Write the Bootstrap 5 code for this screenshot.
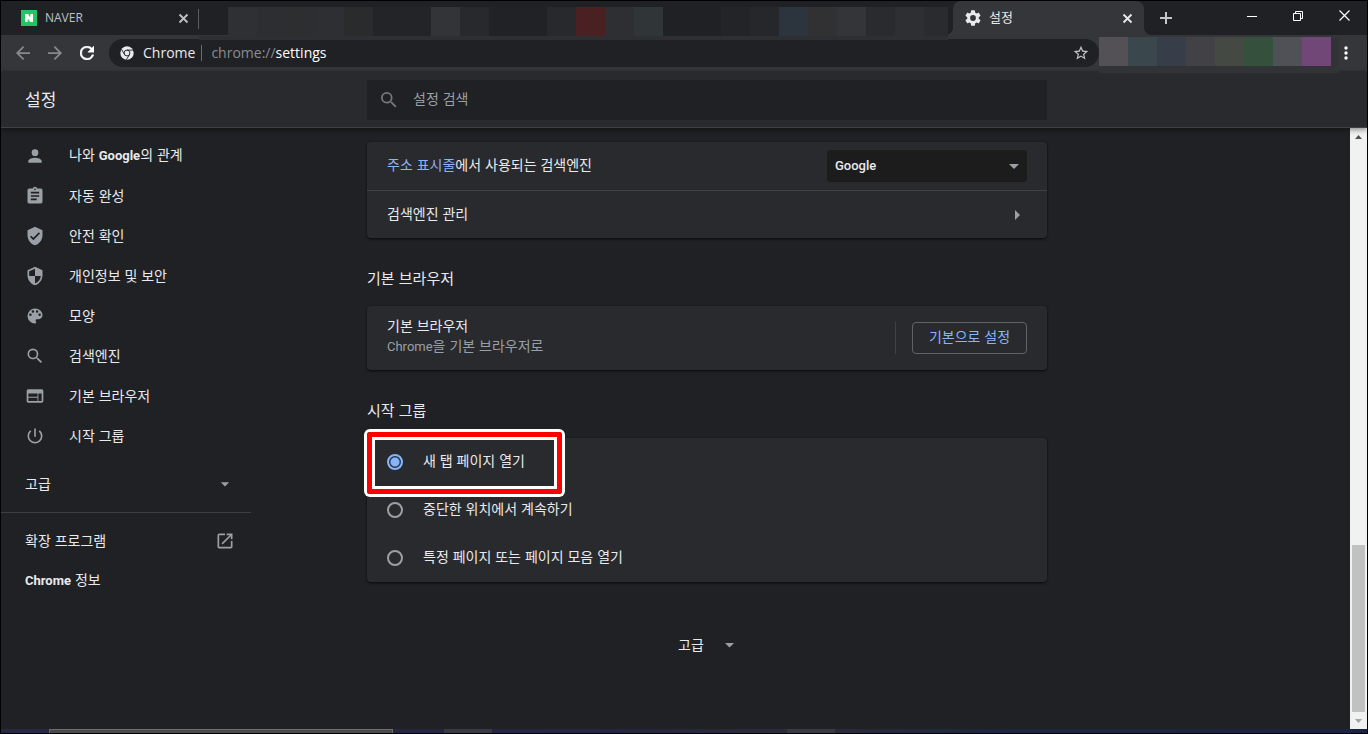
<!DOCTYPE html>
<html lang="ko">
<head>
<meta charset="utf-8">
<meta name="viewport" content="width=device-width, initial-scale=1">
<title>설정</title>
<link href="https://cdn.jsdelivr.net/npm/bootstrap@5.3.0/dist/css/bootstrap.min.css" rel="stylesheet">
<style>
  body { font: 14px/20px "Noto Sans CJK KR", sans-serif; color: #e8eaed; background: #202124; }
  a { color: inherit; text-decoration: none; }
  svg { display: block; fill: currentColor; flex: none; }
  .lat { font-family: Roboto, sans-serif; font-size: 13px; }
  .lat-strong { font-weight: 700; }
  .browser { min-height: 100vh; border: 1px solid #000; }
  .plain { background: none; border: 0; padding: 0; color: inherit; display: flex; align-items: center; justify-content: center; }

  /* tab strip */
  .tabs { height: 34px; }
  .tab-idle { width: 198px; flex: none; padding: 0 10px 0 20px; color: #bdc1c6; font-family: "Open Sans", sans-serif; font-size: 12px; position: relative; }
  .tab-idle::after { content: ""; position: absolute; right: 0; top: 8px; height: 20px; border-right: 1px solid #5a5c60; }
  .tab-live { width: 191px; flex: none; padding: 0 11px 0 12px; margin-left: 5px; background: #35363a; border-radius: 8px 8px 0 0; position: relative; font-size: 13px; }
  .tab-live .txt { padding-bottom: 2px; }
  .tab-live::before, .tab-live::after { content: ""; position: absolute; bottom: 0; width: 8px; height: 8px; }
  .tab-live::before { left: -8px; background: radial-gradient(circle at 0 0, transparent 8px, #35363a 8px); }
  .tab-live::after { right: -8px; background: radial-gradient(circle at 100% 0, transparent 8px, #35363a 8px); }
  .mosaic i { display: block; width: 29px; height: 29px; flex: none; }
  .mosaic-tabs { flex: 1 1 0; min-width: 0; height: 29px; margin-top: 6px; z-index: 1; box-shadow: 0 4px 0 #2e2f32; position: relative; }
  .mosaic-tabs i:last-child { flex: 1 1 0; }
  .win-btn { width: 46px; height: 29px; color: #fff; }

  /* toolbar */
  .toolbar { height: 36px; background: #35363a; padding-left: 6px; }
  .tool-btn { width: 32px; height: 32px; color: #87898d; }
  .omnibox { height: 28px; margin-left: 6px; padding: 0 10px 0 11px; border-radius: 14px; background: #202124; font: 14px/20px "Open Sans", sans-serif; gap: 9px; }
  .omni-sep { width: 1px; height: 16px; background: #6b6d71; margin-left: -3px; }
  .url { color: #8a8d91; }
  .mosaic-ext { box-shadow: 0 7px 0 #323337; position: relative; z-index: 1; margin-bottom: 3px; padding-right: 8px; background: #323337; }

  /* settings page */
  .cols { display: grid; grid-template-columns: minmax(266px, 366fr) minmax(0, 680px) minmax(16px, 303fr); }
  .page-head { background: #292a2d; border-bottom: 1px solid #3f4145; padding: 9px 17px 7px 0; box-shadow: 0 2px 5px #0006; position: relative; }
  .page-title { font-size: 17px; line-height: 24px; padding: 0 0 2px 24px; }
  .find { height: 40px; background: #202124; border-radius: 2px; padding: 0 14px; color: #75787c; }
  .find input { background: none; border: 0; outline: 0; color: #e8eaed; height: 36px; }
  .find input::placeholder { color: #9aa0a6; opacity: 1; }
  .side { width: 250px; padding-top: 8px; }
  .side a { height: 40px; padding-left: 24px; gap: 24px; }
  .side svg { color: #9aa0a6; }
  .side .txt { padding-bottom: 3px; }
  .side-more { width: 100%; height: 48px; padding: 0 16px 0 24px; margin-top: 4px; }
  .side-rule { border-top: 1px solid #3c4043; margin: 4px 0 8px; }
  .panel { background: #292a2d; border-radius: 4px; box-shadow: 0 1px 2px #0008, 0 1px 3px #0004; padding: 0 20px; position: relative; }
  .panel-row { height: 48px; }
  .panel-row .txt { padding-bottom: 4px; }
  .panel-line { border-top: 1px solid #3f4145; margin: 0 -20px; padding: 0 20px; }
  .sec-title { font-size: 15px; line-height: 24px; margin: 28px 0 16px; font-weight: 400; }
  .accent { color: #8ab4f8; }
  .soft { color: #9aa0a6; }
  .engine { width: 200px; height: 32px; padding: 0 32px 0 8px; font: 500 13px/32px Roboto, sans-serif; color: #e8eaed; border: 0; border-radius: 4px;
    background: #1c1c1d url("data:image/svg+xml,%3Csvg xmlns='http://www.w3.org/2000/svg' viewBox='0 0 10 5'%3E%3Cpath fill='%239aa0a6' d='M0 0h10L5 5z'/%3E%3C/svg%3E") no-repeat right 8px center / 10px 5px; }
  .default-btn { width: 115px; height: 32px; padding: 0 0 4px; border: 1px solid #5f6368; border-radius: 4px; color: #8ab4f8; font-size: 14px; line-height: 20px; }
  .btn-rule { height: 32px; border-left: 1px solid #3f4145; margin-right: 16px; }
  .pick { gap: 20px; }
  .pick .form-check-input { width: 16px; height: 16px; margin: 0; background: none; border: 2px solid #9aa0a6; box-shadow: none; }
  .pick .form-check-input:checked { border-color: #8ab4f8; background: radial-gradient(circle, #8ab4f8 4px, #24364f 5px); }
  .callout { position: absolute; left: 0; top: -6px; width: 195px; height: 62px; border: 5px solid #f00; border-radius: 3px; box-shadow: 0 0 0 3px #fff, inset 0 0 0 3px #fff; pointer-events: none; }
  .more { gap: 18px; margin: 50px auto 0; height: 24px; }

  .scroller { width: 17px; background: #f1f1f1; color: #505050; }
  .scroller .plain { height: 17px; }
  .scroll-gap { flex: 400 1 0; }
  .scroll-thumb { flex: 167 1 0; margin: 0 2px; background: #c1c1c1; }
  .taskbar { height: 4px; background: linear-gradient(90deg, #272844, #242540 45%, #2c2b3b 58%, #1b2640 75%, #1a2440); }
  .task-open { width: 344px; margin-left: 48px; background: #4b4a4b; border: 1px solid #6d6b6d; border-bottom: 0; }
  .task-idle { width: 48px; background: #3a3946; }
</style>
<script src="https://cdn.jsdelivr.net/npm/bootstrap@5.3.0/dist/js/bootstrap.bundle.min.js"></script>
</head>
<body>
<div class="browser d-flex flex-column">

  <div class="tabs d-flex">
    <div class="tab-idle d-flex align-items-center">
      <svg width="16" height="16" viewBox="0 0 16 16"><rect width="16" height="16" fill="#1fc663"/><path fill="#fff" d="M4 4h3l2.300 3.600V4H12v8H9.200L6.700 8.400V12H4z"/></svg>
      <span class="ms-2 flex-grow-1">NAVER</span>
      <button class="plain" aria-label="탭 닫기"><svg width="11" height="11" viewBox="0 0 11 11"><path d="M1.500 1.500l8 8m0-8l-8 8" stroke="currentColor" stroke-width="1.800"/></svg></button>
    </div>
    <div class="mosaic mosaic-tabs d-flex">
      <i></i><i style="background:#2f3033"></i><i style="background:#2d2e31"></i><i style="background:#2d2e30"></i><i style="background:#2e2f32"></i><i style="background:#2a2b2d"></i><i style="background:#232427"></i><i style="background:#232427"></i><i style="background:#333438"></i><i style="background:#28292c"></i><i style="background:#212225"></i><i style="background:#212225"></i><i style="background:#28292c"></i><i style="background:#4a2023"></i><i style="background:#2e2f33"></i><i style="background:#303537"></i><i style="background:#202124"></i><i style="background:#202124"></i><i style="background:#232427"></i><i style="background:#26272a"></i><i style="background:#2c353d"></i><i style="background:#313133"></i><i style="background:#343539"></i><i style="background:#2a2b2e"></i><i style="background:#2e2f33"></i><i style="background:#2a2b2e"></i>
    </div>
    <div class="tab-live d-flex align-items-center">
      <svg width="16" height="16" viewBox="2 2 20 20"><path d="M19.140 12.940c.04-.3.060-.61.060-.94s-.02-.64-.07-.94l2.030-1.580a.49.49 0 0 0 .12-.61l-1.920-3.320a.488.488 0 0 0-.59-.22l-2.390.96c-.5-.38-1.030-.7-1.620-.94L14.400 2.810a.484.484 0 0 0-.48-.41h-3.840c-.24 0-.43.17-.47.41L9.250 5.350c-.59.24-1.130.57-1.620.94l-2.390-.96c-.22-.08-.47 0-.59.22L2.740 8.870c-.12.21-.08.47.12.61l2.030 1.580c-.05.3-.09.63-.09.94s.02.64.07.94l-2.030 1.580a.49.49 0 0 0-.12.61l1.920 3.320c.12.22.37.29.59.22l2.390-.96c.5.38 1.030.7 1.620.94l.36 2.540c.05.24.24.41.48.41h3.840c.24 0 .44-.17.47-.41l.36-2.540c.59-.24 1.130-.56 1.620-.94l2.390.96c.22.08.47 0 .59-.22l1.920-3.320c.12-.22.07-.47-.12-.61zM12 15.600A3.600 3.600 0 1 1 12 8.400a3.600 3.600 0 0 1 0 7.200z"/></svg>
      <span class="txt ms-2 flex-grow-1">설정</span>
      <button class="plain" aria-label="탭 닫기"><svg width="11" height="11" viewBox="0 0 11 11"><path d="M1.500 1.500l8 8m0-8l-8 8" stroke="currentColor" stroke-width="1.800"/></svg></button>
    </div>
    <button class="plain ms-3" aria-label="새 탭"><svg width="12" height="12" viewBox="0 0 12 12"><path d="M5 0h2v5h5v2H7v5H5V7H0V5h5z" fill="#c4c7ca"/></svg></button>
    <div class="d-flex" style="margin-left:57px">
      <button class="plain win-btn" aria-label="최소화"><svg width="10" height="10" viewBox="0 0 10 10"><path d="M0 5h10v1H0z"/></svg></button>
      <button class="plain win-btn" aria-label="이전 크기로"><svg width="10" height="10" viewBox="0 0 10 10"><path d="M.5 2.500h7v7h-7zM2.500 2.500v-2h7v7h-2" fill="none" stroke="currentColor"/></svg></button>
      <button class="plain win-btn" aria-label="닫기"><svg width="11" height="11" viewBox="0 0 11 11"><path d="M.5.500l10 10m0-10l-10 10" stroke="currentColor" stroke-width="1.200"/></svg></button>
    </div>
  </div>

  <div class="toolbar d-flex align-items-center">
    <button class="plain tool-btn" aria-label="뒤로"><svg width="14" height="14" viewBox="4 4 16 16"><path d="M20 11H7.830l5.590-5.590L12 4l-8 8 8 8 1.410-1.410L7.830 13H20z"/></svg></button>
    <button class="plain tool-btn" aria-label="앞으로"><svg width="14" height="14" viewBox="4 4 16 16"><path d="M12 4l-1.410 1.410L16.170 11H4v2h12.170l-5.580 5.590L12 20l8-8z"/></svg></button>
    <button class="plain tool-btn text-white" aria-label="새로고침"><svg width="14" height="14" viewBox="4 4 16 16"><path stroke="currentColor" stroke-width=".6" d="M17.650 6.350A7.958 7.958 0 0 0 12 4a8 8 0 1 0 7.730 10h-2.080A6 6 0 1 1 12 6c1.660 0 3.140.69 4.220 1.780L13 11h7V4z"/></svg></button>
    <div class="omnibox d-flex align-items-center flex-grow-1">
      <svg width="14" height="14" viewBox="0 0 24 24"><circle cx="12" cy="12" r="11.500" fill="#e8eaed"/><g fill="none" stroke="#202124" stroke-width="1.600"><circle cx="12" cy="12" r="5"/><path d="M12 7h10.500M16.300 14.500L11 23.500M7.700 14.500L2.500 5.500"/></g></svg>
      <span>Chrome</span><span class="omni-sep"></span>
      <div class="url flex-grow-1 lh-sm" role="textbox" aria-label="주소" tabindex="0">chrome://<span class="text-white">settings</span></div>
      <button class="plain" aria-label="북마크에 추가"><svg width="16" height="16" viewBox="1 1 22 22" fill="#c4c7ca"><path fill="#c4c7ca" d="M22 9.240l-7.190-.62L12 2 9.190 8.630 2 9.240l5.460 4.730L5.820 21 12 17.270 18.180 21l-1.630-7.030zM12 15.400l-3.760 2.270 1-4.280-3.320-2.880 4.380-.38L12 6.100l1.710 4.040 4.380.38-3.320 2.880 1 4.280z"/></svg></button>
    </div>
    <div class="mosaic mosaic-ext d-flex">
      <i style="background:#535156"></i><i style="background:#3a484e"></i><i style="background:#373e49"></i><i style="background:#424246"></i><i style="background:#454943"></i><i style="background:#36503e"></i><i style="background:#505156"></i><i style="background:#704777"></i>
    </div>
    <button class="plain text-white" style="width:14px;margin-right:14px" aria-label="메뉴"><svg width="4" height="14" viewBox="0 0 4 14"><circle cx="2" cy="2" r="1.700"/><circle cx="2" cy="7" r="1.700"/><circle cx="2" cy="12" r="1.700"/></svg></button>
  </div>

  <header class="page-head cols align-items-center">
    <div class="page-title">설정</div>
    <label class="find d-flex align-items-center">
      <svg width="16" height="16" viewBox="3 3 18 18"><path d="M15.500 14h-.79l-.28-.27A6.471 6.471 0 0 0 16 9.500 6.500 6.500 0 1 0 9.500 16c1.610 0 3.090-.59 4.230-1.570l.27.28v.79l5 4.990L20.490 19zm-6 0a4.500 4.500 0 1 1 0-9 4.500 4.500 0 0 1 0 9z"/></svg>
      <input type="search" class="flex-grow-1 ms-3 p-0 mb-1" placeholder="설정 검색" aria-label="설정 검색">
    </label>
  </header>

  <div class="d-flex flex-grow-1">
    <div class="cols flex-grow-1 align-items-start">
      <nav class="side" aria-label="설정">
        <a href="#people" class="d-flex align-items-center"><svg width="20" height="20" viewBox="0 0 24 24"><path d="M12 12a4 4 0 1 0 0-8 4 4 0 0 0 0 8zm0 2c-2.670 0-8 1.340-8 4v2h16v-2c0-2.660-5.330-4-8-4z"/></svg><span class="txt">나와 <span class="lat lat-strong">Google</span>의 관계</span></a>
        <a href="#autofill" class="d-flex align-items-center"><svg width="20" height="20" viewBox="0 0 24 24"><path d="M19 3h-4.180a3 3 0 0 0-5.640 0H5a2 2 0 0 0-2 2v14c0 1.100.9 2 2 2h14a2 2 0 0 0 2-2V5a2 2 0 0 0-2-2zm-7 0a1 1 0 1 1 0 2 1 1 0 0 1 0-2zm2 14H7v-2h7zm3-4H7v-2h10zm0-4H7V7h10z"/></svg><span class="txt">자동 완성</span></a>
        <a href="#safety" class="d-flex align-items-center"><svg width="20" height="20" viewBox="0 0 24 24"><path d="M12 1L3 5v6c0 5.550 3.840 10.740 9 12 5.160-1.260 9-6.450 9-12V5zm-2 16l-4-4 1.410-1.410L10 14.170l6.590-6.590L18 9z"/></svg><span class="txt">안전 확인</span></a>
        <a href="#privacy" class="d-flex align-items-center"><svg width="20" height="20" viewBox="0 0 24 24"><path d="M12 1L3 5v6c0 5.550 3.840 10.740 9 12 5.160-1.260 9-6.450 9-12V5zm0 10.990h7c-.53 4.120-3.280 7.790-7 8.940V12H5V6.300l7-3.110z"/></svg><span class="txt">개인정보 및 보안</span></a>
        <a href="#appearance" class="d-flex align-items-center"><svg width="20" height="20" viewBox="0 0 24 24"><path d="M12 3a9 9 0 0 0 0 18 1.500 1.500 0 0 0 1.110-2.500c-.23-.27-.38-.62-.38-1 0-.83.67-1.500 1.500-1.500H16a5 5 0 0 0 5-5c0-4.420-4.030-8-9-8zm-5.500 9a1.500 1.500 0 1 1 0-3 1.500 1.500 0 0 1 0 3zm3-4a1.500 1.500 0 1 1 0-3 1.500 1.500 0 0 1 0 3zm5 0a1.500 1.500 0 1 1 0-3 1.500 1.500 0 0 1 0 3zm3 4a1.500 1.500 0 1 1 0-3 1.500 1.500 0 0 1 0 3z"/></svg><span class="txt">모양</span></a>
        <a href="#search" class="d-flex align-items-center"><svg width="20" height="20" viewBox="0 0 24 24"><path d="M15.500 14h-.79l-.28-.27A6.471 6.471 0 0 0 16 9.500 6.500 6.500 0 1 0 9.500 16c1.610 0 3.090-.59 4.230-1.570l.27.28v.79l5 4.990L20.490 19zm-6 0a4.500 4.500 0 1 1 0-9 4.500 4.500 0 0 1 0 9z"/></svg><span class="txt">검색엔진</span></a>
        <a href="#default" class="d-flex align-items-center"><svg width="20" height="20" viewBox="0 0 24 24"><path d="M20 4H4a2 2 0 0 0-2 2v12c0 1.100.9 2 2 2h16a2 2 0 0 0 2-2V6a2 2 0 0 0-2-2zm-5 14H4v-4h11zm0-5H4V9h11zm5 5h-4V9h4z"/></svg><span class="txt">기본 브라우저</span></a>
        <a href="#startup" class="d-flex align-items-center"><svg width="20" height="20" viewBox="0 0 24 24"><path d="M13 3h-2v10h2zm4.830 2.170l-1.420 1.420A6.920 6.920 0 0 1 19 12a7 7 0 1 1-11.420-5.420L6.170 5.170A8.932 8.932 0 0 0 3 12a9 9 0 0 0 18 0c0-2.740-1.230-5.180-3.170-6.830z"/></svg><span class="txt">시작 그룹</span></a>
        <button class="plain side-more justify-content-between"><span class="txt">고급</span><svg width="20" height="20" viewBox="0 0 24 24"><path d="M7 10l5 5 5-5z"/></svg></button>
        <div class="side-rule"></div>
        <a href="#extensions" class="d-flex align-items-center justify-content-between pe-3"><span class="txt">확장 프로그램</span><svg width="20" height="20" viewBox="0 0 24 24"><path d="M19 19H5V5h7V3H5a2 2 0 0 0-2 2v14a2 2 0 0 0 2 2h14c1.100 0 2-.9 2-2v-7h-2zM14 3v2h3.590l-9.830 9.830 1.410 1.410L19 6.410V10h2V3z"/></svg></a>
        <a href="#about" class="d-flex align-items-center"><span class="txt"><span class="lat lat-strong">Chrome</span> 정보</span></a>
      </nav>

      <main class="d-flex flex-column" style="padding-top:14px">
        <section class="panel">
          <div class="panel-row d-flex align-items-center justify-content-between">
            <label class="txt" for="engine"><a href="#omnibox" class="accent">주소 표시줄</a>에서 사용되는 검색엔진</label>
            <select id="engine" class="form-select engine"><option>Google</option></select>
          </div>
          <div class="panel-line">
            <a href="#engines" class="d-flex align-items-center justify-content-between" style="height:47px"><span class="pb-1">검색엔진 관리</span><svg class="soft" width="20" height="20" viewBox="0 0 20 20"><path d="M8 5l5 5-5 5z"/></svg></a>
          </div>
        </section>

        <h2 class="sec-title">기본 브라우저</h2>
        <section class="panel d-flex align-items-center" style="height:64px">
          <div class="flex-grow-1 pb-1"><div>기본 브라우저</div><div class="soft"><span class="lat">Chrome</span>을 기본 브라우저로</div></div>
          <div class="btn-rule"></div>
          <button class="btn default-btn">기본으로 설정</button>
        </section>

        <h2 class="sec-title">시작 그룹</h2>
        <section class="panel">
          <div class="panel-row pick d-flex align-items-center"><input class="form-check-input" type="radio" name="startup" id="s1" checked><label class="txt" for="s1">새 탭 페이지 열기</label></div>
          <div class="panel-row pick d-flex align-items-center"><input class="form-check-input" type="radio" name="startup" id="s2"><label class="txt" for="s2">중단한 위치에서 계속하기</label></div>
          <div class="panel-row pick d-flex align-items-center"><input class="form-check-input" type="radio" name="startup" id="s3"><label class="txt" for="s3">특정 페이지 또는 페이지 모음 열기</label></div>
          <div class="callout"></div>
        </section>

        <button class="plain more"><span>고급</span><svg class="soft" width="14" height="14" viewBox="0 0 14 14"><path d="M3 6h9l-4.500 4.500z"/></svg></button>
      </main>
    </div>

    <div class="scroller d-flex flex-column" aria-hidden="true">
      <div class="plain"><svg width="7" height="4" viewBox="0 0 7 4"><path d="M0 4l3.500-4L7 4z"/></svg></div>
      <div class="scroll-gap"></div>
      <div class="scroll-thumb"></div>
      <div class="plain"><svg width="7" height="4" viewBox="0 0 7 4"><path fill="#a3a3a3" d="M0 0h7L3.500 4z"/></svg></div>
    </div>
  </div>

  <div class="taskbar d-flex">
    <div class="task-open"></div>
    <div class="task-idle" style="margin-left:51px"></div>
    <div class="task-idle" style="margin-left:295px"></div>
  </div>
</div>
</body>
</html>
